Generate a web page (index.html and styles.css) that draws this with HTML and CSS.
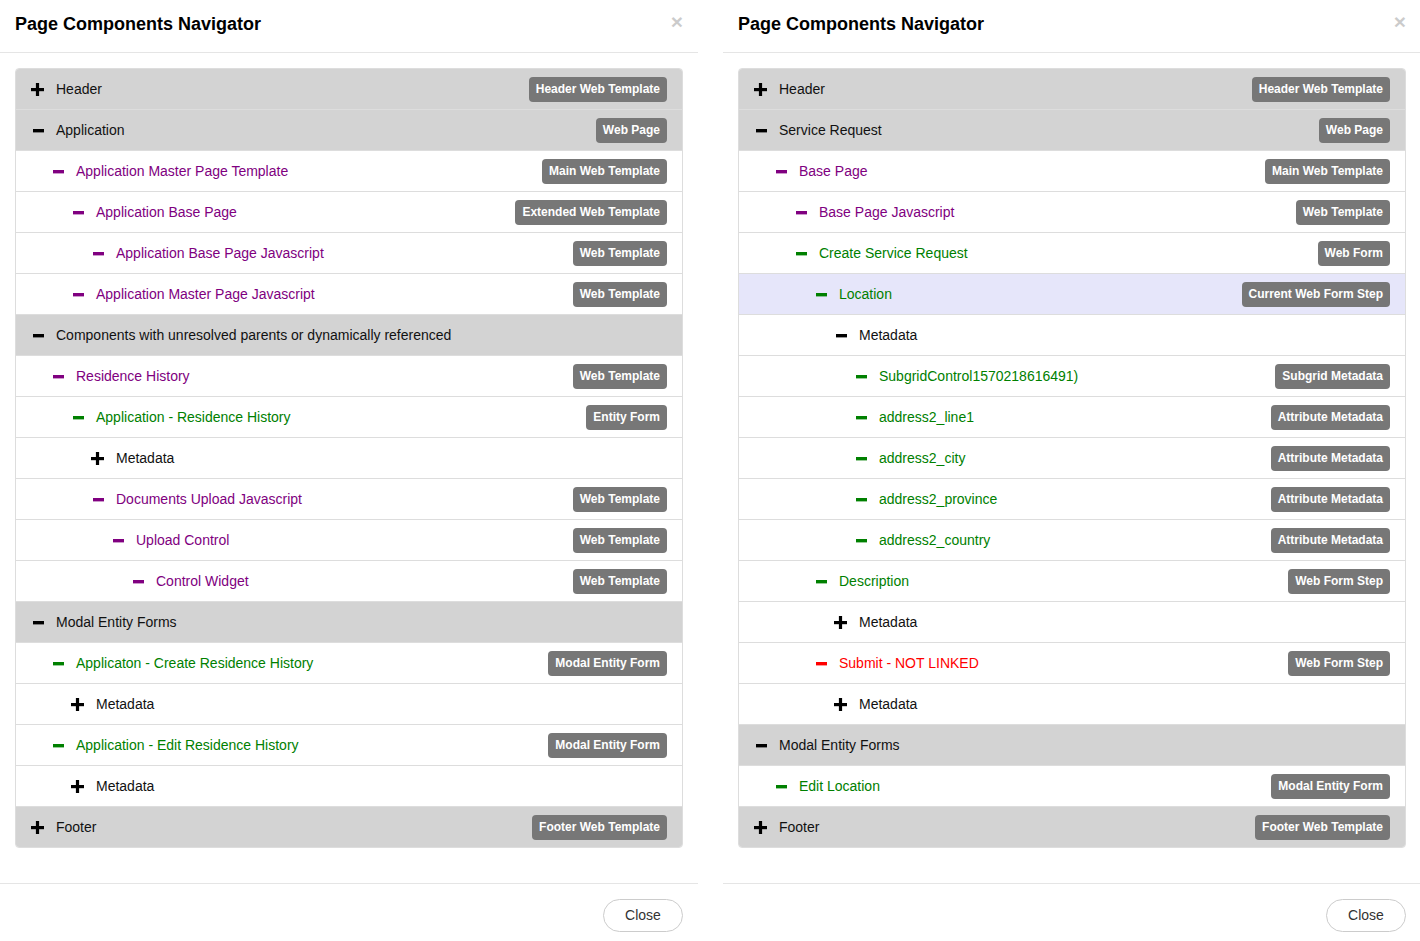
FILE: index.html
```html
<!DOCTYPE html>
<html>
<head>
<meta charset="utf-8">
<link rel="stylesheet" href="styles.css">
<title>Page Components Navigator</title>
</head>
<body>
<svg width="0" height="0" class="defs">
  <defs>
    <symbol id="i-plus" viewBox="0 0 13 13"><rect x="0" y="5" width="13" height="3.2"/><rect x="4.9" y="0" width="3.2" height="13"/></symbol>
    <symbol id="i-minus" viewBox="0 0 13 13"><rect x="2" y="5" width="11" height="3.4"/></symbol>
  </defs>
</svg>
<div class="page">
  <!-- LEFT MODAL -->
  <div class="modal">
    <div class="modal-header">
      <h4 class="modal-title">Page Components Navigator</h4>
      <span class="close">×</span>
    </div>
    <div class="modal-body">
      <div class="tree">
        <div class="row top"><svg class="ico"><use href="#i-plus"/></svg><span class="label">Header</span><span class="badge">Header Web Template</span></div>
        <div class="row top"><svg class="ico"><use href="#i-minus"/></svg><span class="label">Application</span><span class="badge">Web Page</span></div>
        <div class="row l1 purple"><svg class="ico"><use href="#i-minus"/></svg><span class="label">Application Master Page Template</span><span class="badge">Main Web Template</span></div>
        <div class="row l2 purple"><svg class="ico"><use href="#i-minus"/></svg><span class="label">Application Base Page</span><span class="badge">Extended Web Template</span></div>
        <div class="row l3 purple"><svg class="ico"><use href="#i-minus"/></svg><span class="label">Application Base Page Javascript</span><span class="badge">Web Template</span></div>
        <div class="row l2 purple"><svg class="ico"><use href="#i-minus"/></svg><span class="label">Application Master Page Javascript</span><span class="badge">Web Template</span></div>
        <div class="row top"><svg class="ico"><use href="#i-minus"/></svg><span class="label">Components with unresolved parents or dynamically referenced</span></div>
        <div class="row l1 purple"><svg class="ico"><use href="#i-minus"/></svg><span class="label">Residence History</span><span class="badge">Web Template</span></div>
        <div class="row l2 green"><svg class="ico"><use href="#i-minus"/></svg><span class="label">Application - Residence History</span><span class="badge">Entity Form</span></div>
        <div class="row l3"><svg class="ico"><use href="#i-plus"/></svg><span class="label">Metadata</span></div>
        <div class="row l3 purple"><svg class="ico"><use href="#i-minus"/></svg><span class="label">Documents Upload Javascript</span><span class="badge">Web Template</span></div>
        <div class="row l4 purple"><svg class="ico"><use href="#i-minus"/></svg><span class="label">Upload Control</span><span class="badge">Web Template</span></div>
        <div class="row l5 purple"><svg class="ico"><use href="#i-minus"/></svg><span class="label">Control Widget</span><span class="badge">Web Template</span></div>
        <div class="row top"><svg class="ico"><use href="#i-minus"/></svg><span class="label">Modal Entity Forms</span></div>
        <div class="row l1 green"><svg class="ico"><use href="#i-minus"/></svg><span class="label">Applicaton - Create Residence History</span><span class="badge">Modal Entity Form</span></div>
        <div class="row l2"><svg class="ico"><use href="#i-plus"/></svg><span class="label">Metadata</span></div>
        <div class="row l1 green"><svg class="ico"><use href="#i-minus"/></svg><span class="label">Application - Edit Residence History</span><span class="badge">Modal Entity Form</span></div>
        <div class="row l2"><svg class="ico"><use href="#i-plus"/></svg><span class="label">Metadata</span></div>
        <div class="row top"><svg class="ico"><use href="#i-plus"/></svg><span class="label">Footer</span><span class="badge">Footer Web Template</span></div>
      </div>
    </div>
    <div class="modal-footer">
      <button class="btn-close">Close</button>
    </div>
  </div>

  <!-- RIGHT MODAL -->
  <div class="modal">
    <div class="modal-header">
      <h4 class="modal-title">Page Components Navigator</h4>
      <span class="close">×</span>
    </div>
    <div class="modal-body">
      <div class="tree">
        <div class="row top"><svg class="ico"><use href="#i-plus"/></svg><span class="label">Header</span><span class="badge">Header Web Template</span></div>
        <div class="row top"><svg class="ico"><use href="#i-minus"/></svg><span class="label">Service Request</span><span class="badge">Web Page</span></div>
        <div class="row l1 purple"><svg class="ico"><use href="#i-minus"/></svg><span class="label">Base Page</span><span class="badge">Main Web Template</span></div>
        <div class="row l2 purple"><svg class="ico"><use href="#i-minus"/></svg><span class="label">Base Page Javascript</span><span class="badge">Web Template</span></div>
        <div class="row l2 green"><svg class="ico"><use href="#i-minus"/></svg><span class="label">Create Service Request</span><span class="badge">Web Form</span></div>
        <div class="row l3 green current"><svg class="ico"><use href="#i-minus"/></svg><span class="label">Location</span><span class="badge">Current Web Form Step</span></div>
        <div class="row l4"><svg class="ico"><use href="#i-minus"/></svg><span class="label">Metadata</span></div>
        <div class="row l5 green"><svg class="ico"><use href="#i-minus"/></svg><span class="label">SubgridControl1570218616491)</span><span class="badge">Subgrid Metadata</span></div>
        <div class="row l5 green"><svg class="ico"><use href="#i-minus"/></svg><span class="label">address2_line1</span><span class="badge">Attribute Metadata</span></div>
        <div class="row l5 green"><svg class="ico"><use href="#i-minus"/></svg><span class="label">address2_city</span><span class="badge">Attribute Metadata</span></div>
        <div class="row l5 green"><svg class="ico"><use href="#i-minus"/></svg><span class="label">address2_province</span><span class="badge">Attribute Metadata</span></div>
        <div class="row l5 green"><svg class="ico"><use href="#i-minus"/></svg><span class="label">address2_country</span><span class="badge">Attribute Metadata</span></div>
        <div class="row l3 green"><svg class="ico"><use href="#i-minus"/></svg><span class="label">Description</span><span class="badge">Web Form Step</span></div>
        <div class="row l4"><svg class="ico"><use href="#i-plus"/></svg><span class="label">Metadata</span></div>
        <div class="row l3 red"><svg class="ico"><use href="#i-minus"/></svg><span class="label">Submit - NOT LINKED</span><span class="badge">Web Form Step</span></div>
        <div class="row l4"><svg class="ico"><use href="#i-plus"/></svg><span class="label">Metadata</span></div>
        <div class="row top"><svg class="ico"><use href="#i-minus"/></svg><span class="label">Modal Entity Forms</span></div>
        <div class="row l1 green"><svg class="ico"><use href="#i-minus"/></svg><span class="label">Edit Location</span><span class="badge">Modal Entity Form</span></div>
        <div class="row top"><svg class="ico"><use href="#i-plus"/></svg><span class="label">Footer</span><span class="badge">Footer Web Template</span></div>
      </div>
    </div>
    <div class="modal-footer">
      <button class="btn-close">Close</button>
    </div>
  </div>
</div>
</body>
</html>
```

FILE: styles.css
```css
* { box-sizing: border-box; }

html, body {
  margin: 0;
  padding: 0;
  background: #fff;
  font-family: "Liberation Sans", Arial, sans-serif;
  font-size: 14px;
  color: #222;
  overflow: hidden;
}

.defs { position: absolute; width: 0; height: 0; overflow: hidden; }

.page {
  display: flex;
  gap: 25px;
  width: 1421px;
}

.modal {
  display: flex;
  flex-direction: column;
  flex: 0 0 698px;
  width: 698px;
  background: #fff;
}

.modal-header {
  display: flex;
  align-items: flex-start;
  justify-content: space-between;
  height: 53px;
  padding: 12px 15px 0 15px;
  border-bottom: 1px solid #e5e5e5;
}

.modal-title {
  margin: 0;
  font-size: 18px;
  line-height: 24px;
  font-weight: bold;
  color: #000;
}

.close {
  font-size: 21px;
  line-height: 18px;
  font-weight: bold;
  color: #000;
  opacity: 0.2;
  margin-top: 1px;
}

.modal-body {
  padding: 15px;
}

.tree {
  border: 1px solid #ddd;
  border-radius: 4px;
  overflow: hidden;
  margin-bottom: 20px;
}

.row {
  display: flex;
  align-items: center;
  height: 41px;
  padding: 0 15px;
  border-top: 1px solid #ddd;
  background: #fff;
  color: #111;
}
.row:first-child { height: 40px; border-top: none; }

.row.top { background: #d3d3d3; }
.row.current { background: #e6e6fa; }

.row.l1 { padding-left: 35px; }
.row.l2 { padding-left: 55px; }
.row.l3 { padding-left: 75px; }
.row.l4 { padding-left: 95px; }
.row.l5 { padding-left: 115px; }

.row.purple { color: #800080; }
.row.green { color: #008000; }
.row.red { color: #ff0000; }

.ico {
  width: 13px;
  height: 13px;
  flex: 0 0 13px;
  fill: currentColor;
  margin-right: 12px;
}
.row:not(.purple):not(.green):not(.red) .ico { fill: #000; }

.label {
  flex: 1 1 auto;
  line-height: 20px;
  white-space: nowrap;
}

.badge {
  flex: 0 0 auto;
  background: #777;
  color: #fff;
  font-weight: bold;
  font-size: 12px;
  line-height: 25px;
  height: 25px;
  padding: 0 7px;
  border-radius: 4px;
  white-space: nowrap;
}

.modal-footer {
  display: flex;
  justify-content: flex-end;
  padding: 15px;
  border-top: 1px solid #e5e5e5;
}

.btn-close {
  font-family: "Liberation Sans", Arial, sans-serif;
  font-size: 14px;
  line-height: 20px;
  color: #333;
  background: #fff;
  border: 1px solid #ccc;
  border-radius: 17px;
  width: 80px;
  height: 33px;
  padding: 0 0 1px 0;
}
```
